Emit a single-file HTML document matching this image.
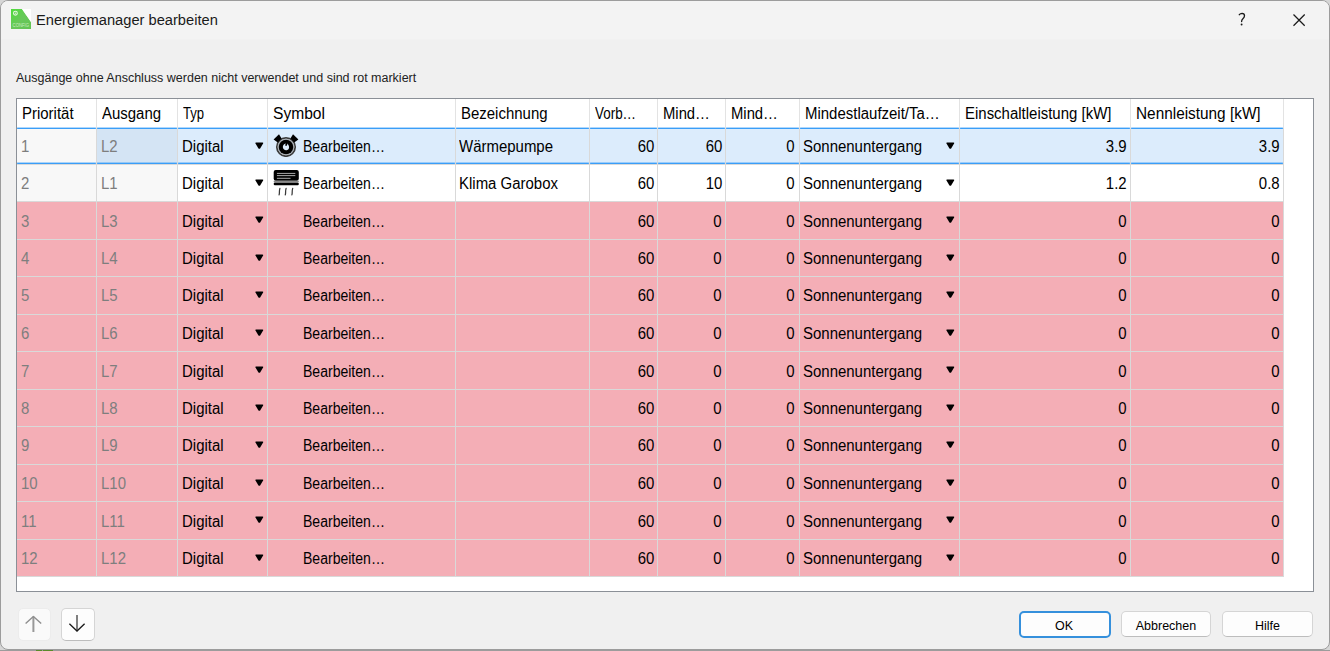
<!DOCTYPE html>
<html><head><meta charset="utf-8"><style>
html,body{margin:0;padding:0;}
body{width:1330px;height:651px;position:relative;overflow:hidden;background:#d6d6d6;font-family:"Liberation Sans",sans-serif;}
#win{position:absolute;left:0;top:0;width:1328px;height:648px;border:1px solid #9c9c9c;border-radius:8px;background:#f0f0f0;overflow:hidden;}
#tb{position:absolute;left:0;top:0;width:1328px;height:38px;background:#f3f3f3;border-bottom:1px solid #f1f1f1;}
.t{position:absolute;white-space:pre;line-height:1;}
#frame{position:absolute;left:16px;top:98px;width:1296px;height:492px;border:1px solid #8b9097;background:#fff;}
.c{position:absolute;overflow:hidden;}
.txt{position:absolute;white-space:pre;font-size:15.6px;line-height:1;color:#000;transform:scaleX(0.96);transform-origin:0 0;}
.txr{transform-origin:100% 0;}
.ar{position:absolute;}
.ic{position:absolute;}
.gl{position:absolute;background:#d9d9d9;}
.btn{position:absolute;box-sizing:border-box;border-radius:5px;background:#fdfdfd;border:1px solid #d5d5d5;border-bottom-color:#bdbdbd;font-size:12.5px;color:#000;text-align:center;}
</style></head><body>
<div id="win">
<div id="tb"></div>

<svg style="position:absolute;left:10px;top:8px" width="20" height="20" viewBox="0 0 20 20">
<defs><linearGradient id="gg" x1="0" y1="0" x2="1" y2="1"><stop offset="0" stop-color="#4fdc3c"/><stop offset="0.5" stop-color="#68c85a"/><stop offset="1" stop-color="#62c454"/></linearGradient></defs>
<path d="M0 0 L11 0 L20 13 L20 20 L0 20 Z" fill="url(#gg)"/>
<path d="M11 0 L20 0 L20 13 Z" fill="#ffffff"/>
<circle cx="4.4" cy="4.2" r="1.9" fill="none" stroke="#e6f6e2" stroke-width="1.1"/>
<circle cx="4.4" cy="4.2" r="0.6" fill="#e6f6e2"/>
<text x="1.6" y="18.2" font-family="Liberation Sans" font-size="5" textLength="16.5" lengthAdjust="spacingAndGlyphs" fill="#c8ecc0">CONFIG</text>
</svg>
<div class="t" style="left:35px;top:11px;font-size:15.4px;color:#1a1a1a;transform:scaleX(0.953);transform-origin:0 0">Energiemanager bearbeiten</div>
<svg style="position:absolute;left:1233px;top:9px" width="16" height="18" viewBox="0 0 16 18"><path d="M5.3 4.7 Q6.4 3.3 8 3.3 Q10.5 3.4 10.5 5.8 Q10.5 7.4 8.9 8.8 Q7.6 9.9 7.6 11.6" stroke="#1a1a1a" stroke-width="1.35" fill="none" stroke-linecap="round"/><circle cx="7.6" cy="14.5" r="0.95" fill="#1a1a1a"/></svg>
<svg style="position:absolute;left:1290px;top:11px" width="16" height="16" viewBox="0 0 16 16"><path d="M2.5 2.5 L13.7 13.7 M13.7 2.5 L2.5 13.7" stroke="#1a1a1a" stroke-width="1.25"/></svg>
<div class="t" style="left:15px;top:71px;font-size:12.5px;color:#222">Ausgänge ohne Anschluss werden nicht verwendet und sind rot markiert</div>
</div>
<div id="frame"></div>
<div class="txt" style="left:22px;top:106px;transform:scaleX(0.96)">Priorität</div>
<div class="gl" style="left:96px;top:99px;width:1px;height:29px;background:#e3e3e3"></div>
<div class="txt" style="left:102px;top:106px;transform:scaleX(0.96)">Ausgang</div>
<div class="gl" style="left:177px;top:99px;width:1px;height:29px;background:#e3e3e3"></div>
<div class="txt" style="left:183px;top:106px;transform:scaleX(0.84)">Typ</div>
<div class="gl" style="left:267px;top:99px;width:1px;height:29px;background:#e3e3e3"></div>
<div class="txt" style="left:273px;top:106px;transform:scaleX(1.0)">Symbol</div>
<div class="gl" style="left:455px;top:99px;width:1px;height:29px;background:#e3e3e3"></div>
<div class="txt" style="left:461px;top:106px;transform:scaleX(0.96)">Bezeichnung</div>
<div class="gl" style="left:589px;top:99px;width:1px;height:29px;background:#e3e3e3"></div>
<div class="txt" style="left:595px;top:106px;transform:scaleX(0.86)">Vorb…</div>
<div class="gl" style="left:657px;top:99px;width:1px;height:29px;background:#e3e3e3"></div>
<div class="txt" style="left:663px;top:106px;transform:scaleX(0.95)">Mind…</div>
<div class="gl" style="left:725px;top:99px;width:1px;height:29px;background:#e3e3e3"></div>
<div class="txt" style="left:731px;top:106px;transform:scaleX(0.95)">Mind…</div>
<div class="gl" style="left:799px;top:99px;width:1px;height:29px;background:#e3e3e3"></div>
<div class="txt" style="left:805px;top:106px;transform:scaleX(0.96)">Mindestlaufzeit/Ta…</div>
<div class="gl" style="left:959px;top:99px;width:1px;height:29px;background:#e3e3e3"></div>
<div class="txt" style="left:965px;top:106px;transform:scaleX(0.96)">Einschaltleistung [kW]</div>
<div class="gl" style="left:1130px;top:99px;width:1px;height:29px;background:#e3e3e3"></div>
<div class="txt" style="left:1136px;top:106px;transform:scaleX(0.985)">Nennleistung [kW]</div>
<div class="gl" style="left:1283px;top:99px;width:1px;height:29px;background:#e3e3e3"></div>
<div class="c" style="left:17px;top:128px;width:79px;height:36px;background:#f8f8f8"></div>
<div class="gl" style="left:96px;top:128px;width:1px;height:37px"></div>
<div class="gl" style="left:17px;top:164px;width:79px;height:1px"></div>
<div style="position:absolute;left:17px;top:127px;width:79px;height:1px;background:#3a9ef8;opacity:0.4;border-radius:1px"></div>
<div style="position:absolute;left:17px;top:128px;width:79px;height:1px;background:#3a9ef8;border-radius:1px"></div>
<div style="position:absolute;left:17px;top:162px;width:79px;height:1px;background:#3a9ef8;opacity:0.4;border-radius:1px"></div>
<div style="position:absolute;left:17px;top:163px;width:79px;height:1px;background:#3a9ef8;border-radius:1px"></div>
<div class="c" style="left:97px;top:128px;width:80px;height:36px;background:#d4e4f4"></div>
<div class="gl" style="left:177px;top:128px;width:1px;height:37px"></div>
<div class="gl" style="left:97px;top:164px;width:80px;height:1px"></div>
<div style="position:absolute;left:97px;top:127px;width:80px;height:1px;background:#3a9ef8;opacity:0.4;border-radius:1px"></div>
<div style="position:absolute;left:97px;top:128px;width:80px;height:1px;background:#3a9ef8;border-radius:1px"></div>
<div style="position:absolute;left:97px;top:162px;width:80px;height:1px;background:#3a9ef8;opacity:0.4;border-radius:1px"></div>
<div style="position:absolute;left:97px;top:163px;width:80px;height:1px;background:#3a9ef8;border-radius:1px"></div>
<div class="c" style="left:178px;top:128px;width:89px;height:36px;background:#dcecfc"></div>
<div class="gl" style="left:267px;top:128px;width:1px;height:37px"></div>
<div class="gl" style="left:178px;top:164px;width:89px;height:1px"></div>
<div style="position:absolute;left:178px;top:127px;width:89px;height:1px;background:#3a9ef8;opacity:0.4;border-radius:1px"></div>
<div style="position:absolute;left:178px;top:128px;width:89px;height:1px;background:#3a9ef8;border-radius:1px"></div>
<div style="position:absolute;left:178px;top:162px;width:89px;height:1px;background:#3a9ef8;opacity:0.4;border-radius:1px"></div>
<div style="position:absolute;left:178px;top:163px;width:89px;height:1px;background:#3a9ef8;border-radius:1px"></div>
<div class="c" style="left:268px;top:128px;width:187px;height:36px;background:#dcecfc"></div>
<div class="gl" style="left:455px;top:128px;width:1px;height:37px"></div>
<div class="gl" style="left:268px;top:164px;width:187px;height:1px"></div>
<div style="position:absolute;left:268px;top:127px;width:187px;height:1px;background:#3a9ef8;opacity:0.4;border-radius:1px"></div>
<div style="position:absolute;left:268px;top:128px;width:187px;height:1px;background:#3a9ef8;border-radius:1px"></div>
<div style="position:absolute;left:268px;top:162px;width:187px;height:1px;background:#3a9ef8;opacity:0.4;border-radius:1px"></div>
<div style="position:absolute;left:268px;top:163px;width:187px;height:1px;background:#3a9ef8;border-radius:1px"></div>
<div class="c" style="left:456px;top:128px;width:133px;height:36px;background:#dcecfc"></div>
<div class="gl" style="left:589px;top:128px;width:1px;height:37px"></div>
<div class="gl" style="left:456px;top:164px;width:133px;height:1px"></div>
<div style="position:absolute;left:456px;top:127px;width:133px;height:1px;background:#3a9ef8;opacity:0.4;border-radius:1px"></div>
<div style="position:absolute;left:456px;top:128px;width:133px;height:1px;background:#3a9ef8;border-radius:1px"></div>
<div style="position:absolute;left:456px;top:162px;width:133px;height:1px;background:#3a9ef8;opacity:0.4;border-radius:1px"></div>
<div style="position:absolute;left:456px;top:163px;width:133px;height:1px;background:#3a9ef8;border-radius:1px"></div>
<div class="c" style="left:590px;top:128px;width:67px;height:36px;background:#dcecfc"></div>
<div class="gl" style="left:657px;top:128px;width:1px;height:37px"></div>
<div class="gl" style="left:590px;top:164px;width:67px;height:1px"></div>
<div style="position:absolute;left:590px;top:127px;width:67px;height:1px;background:#3a9ef8;opacity:0.4;border-radius:1px"></div>
<div style="position:absolute;left:590px;top:128px;width:67px;height:1px;background:#3a9ef8;border-radius:1px"></div>
<div style="position:absolute;left:590px;top:162px;width:67px;height:1px;background:#3a9ef8;opacity:0.4;border-radius:1px"></div>
<div style="position:absolute;left:590px;top:163px;width:67px;height:1px;background:#3a9ef8;border-radius:1px"></div>
<div class="c" style="left:658px;top:128px;width:67px;height:36px;background:#dcecfc"></div>
<div class="gl" style="left:725px;top:128px;width:1px;height:37px"></div>
<div class="gl" style="left:658px;top:164px;width:67px;height:1px"></div>
<div style="position:absolute;left:658px;top:127px;width:67px;height:1px;background:#3a9ef8;opacity:0.4;border-radius:1px"></div>
<div style="position:absolute;left:658px;top:128px;width:67px;height:1px;background:#3a9ef8;border-radius:1px"></div>
<div style="position:absolute;left:658px;top:162px;width:67px;height:1px;background:#3a9ef8;opacity:0.4;border-radius:1px"></div>
<div style="position:absolute;left:658px;top:163px;width:67px;height:1px;background:#3a9ef8;border-radius:1px"></div>
<div class="c" style="left:726px;top:128px;width:73px;height:36px;background:#dcecfc"></div>
<div class="gl" style="left:799px;top:128px;width:1px;height:37px"></div>
<div class="gl" style="left:726px;top:164px;width:73px;height:1px"></div>
<div style="position:absolute;left:726px;top:127px;width:73px;height:1px;background:#3a9ef8;opacity:0.4;border-radius:1px"></div>
<div style="position:absolute;left:726px;top:128px;width:73px;height:1px;background:#3a9ef8;border-radius:1px"></div>
<div style="position:absolute;left:726px;top:162px;width:73px;height:1px;background:#3a9ef8;opacity:0.4;border-radius:1px"></div>
<div style="position:absolute;left:726px;top:163px;width:73px;height:1px;background:#3a9ef8;border-radius:1px"></div>
<div class="c" style="left:800px;top:128px;width:159px;height:36px;background:#dcecfc"></div>
<div class="gl" style="left:959px;top:128px;width:1px;height:37px"></div>
<div class="gl" style="left:800px;top:164px;width:159px;height:1px"></div>
<div style="position:absolute;left:800px;top:127px;width:159px;height:1px;background:#3a9ef8;opacity:0.4;border-radius:1px"></div>
<div style="position:absolute;left:800px;top:128px;width:159px;height:1px;background:#3a9ef8;border-radius:1px"></div>
<div style="position:absolute;left:800px;top:162px;width:159px;height:1px;background:#3a9ef8;opacity:0.4;border-radius:1px"></div>
<div style="position:absolute;left:800px;top:163px;width:159px;height:1px;background:#3a9ef8;border-radius:1px"></div>
<div class="c" style="left:960px;top:128px;width:170px;height:36px;background:#dcecfc"></div>
<div class="gl" style="left:1130px;top:128px;width:1px;height:37px"></div>
<div class="gl" style="left:960px;top:164px;width:170px;height:1px"></div>
<div style="position:absolute;left:960px;top:127px;width:170px;height:1px;background:#3a9ef8;opacity:0.4;border-radius:1px"></div>
<div style="position:absolute;left:960px;top:128px;width:170px;height:1px;background:#3a9ef8;border-radius:1px"></div>
<div style="position:absolute;left:960px;top:162px;width:170px;height:1px;background:#3a9ef8;opacity:0.4;border-radius:1px"></div>
<div style="position:absolute;left:960px;top:163px;width:170px;height:1px;background:#3a9ef8;border-radius:1px"></div>
<div class="c" style="left:1131px;top:128px;width:152px;height:36px;background:#dcecfc"></div>
<div class="gl" style="left:1283px;top:128px;width:1px;height:37px"></div>
<div class="gl" style="left:1131px;top:164px;width:152px;height:1px"></div>
<div style="position:absolute;left:1131px;top:127px;width:152px;height:1px;background:#3a9ef8;opacity:0.4;border-radius:1px"></div>
<div style="position:absolute;left:1131px;top:128px;width:152px;height:1px;background:#3a9ef8;border-radius:1px"></div>
<div style="position:absolute;left:1131px;top:162px;width:152px;height:1px;background:#3a9ef8;opacity:0.4;border-radius:1px"></div>
<div style="position:absolute;left:1131px;top:163px;width:152px;height:1px;background:#3a9ef8;border-radius:1px"></div>
<div class="txt" style="left:21px;top:139px;color:#7e7e7e">1</div>
<div class="txt" style="left:101px;top:139px;color:#7e7e7e">L2</div>
<div class="txt" style="left:182px;top:139px">Digital</div>
<svg class="ar" style="left:254.7px;top:141.5px" width="9" height="8" viewBox="0 0 9 8"><path d="M1.1 0.5 L7.5 0.5 Q8.6 0.5 8.1 1.4 L5.3 6.3 Q4.3 7.3 3.3 6.3 L0.5 1.4 Q0 0.5 1.1 0.5 Z" fill="#000"/></svg>
<svg class="ic" style="left:272px;top:133px" width="28" height="24" viewBox="0 0 28 24">
<circle cx="14" cy="14" r="9.2" fill="none" stroke="#3a3a3a" stroke-width="1.7"/>
<circle cx="14" cy="14" r="7.9" fill="none" stroke="#9a9a9a" stroke-width="0.8"/>
<circle cx="14" cy="14" r="7.3" fill="#000"/>
<path d="M14 10.4 C11.6 10.6 10.6 12.6 10.9 14.6 C11.3 16.8 13.2 17.6 14.6 17.3 C16.6 16.9 17.4 15 17 13.4 C16.7 12.2 16 11.2 15.2 10.6 C15.5 11.8 15.1 12.8 14.2 13 C13.1 13.2 12.9 11.4 14 10.4 Z" fill="#dcecfc"/>
<path d="M1.6 6.6 L7 1.2 L9.6 5.6 L5.8 9.4 Z" fill="#000"/>
<path d="M26.4 6.6 L21 1.2 L18.4 5.6 L22.2 9.4 Z" fill="#000"/>
</svg>
<div class="txt" style="left:303px;top:139px;transform:scaleX(0.90)">Bearbeiten…</div>
<div class="txt" style="left:459px;top:139px">Wärmepumpe</div>
<div class="txt txr" style="right:676px;top:139px">60</div>
<div class="txt txr" style="right:608px;top:139px">60</div>
<div class="txt txr" style="right:535px;top:139px">0</div>
<div class="txt txr" style="right:203px;top:139px">3.9</div>
<div class="txt txr" style="right:50px;top:139px">3.9</div>
<div class="txt" style="left:803px;top:139px">Sonnenuntergang</div>
<svg class="ar" style="left:945.8px;top:141.5px" width="9" height="8" viewBox="0 0 9 8"><path d="M1.1 0.5 L7.5 0.5 Q8.6 0.5 8.1 1.4 L5.3 6.3 Q4.3 7.3 3.3 6.3 L0.5 1.4 Q0 0.5 1.1 0.5 Z" fill="#000"/></svg>
<div class="c" style="left:17px;top:165px;width:79px;height:36px;background:#f8f8f8"></div>
<div class="gl" style="left:96px;top:165px;width:1px;height:37px"></div>
<div class="gl" style="left:17px;top:201px;width:79px;height:1px"></div>
<div class="c" style="left:97px;top:165px;width:80px;height:36px;background:#f8f8f8"></div>
<div class="gl" style="left:177px;top:165px;width:1px;height:37px"></div>
<div class="gl" style="left:97px;top:201px;width:80px;height:1px"></div>
<div class="c" style="left:178px;top:165px;width:89px;height:36px;background:#fff"></div>
<div class="gl" style="left:267px;top:165px;width:1px;height:37px"></div>
<div class="gl" style="left:178px;top:201px;width:89px;height:1px"></div>
<div class="c" style="left:268px;top:165px;width:187px;height:36px;background:#fff"></div>
<div class="gl" style="left:455px;top:165px;width:1px;height:37px"></div>
<div class="gl" style="left:268px;top:201px;width:187px;height:1px"></div>
<div class="c" style="left:456px;top:165px;width:133px;height:36px;background:#fff"></div>
<div class="gl" style="left:589px;top:165px;width:1px;height:37px"></div>
<div class="gl" style="left:456px;top:201px;width:133px;height:1px"></div>
<div class="c" style="left:590px;top:165px;width:67px;height:36px;background:#fff"></div>
<div class="gl" style="left:657px;top:165px;width:1px;height:37px"></div>
<div class="gl" style="left:590px;top:201px;width:67px;height:1px"></div>
<div class="c" style="left:658px;top:165px;width:67px;height:36px;background:#fff"></div>
<div class="gl" style="left:725px;top:165px;width:1px;height:37px"></div>
<div class="gl" style="left:658px;top:201px;width:67px;height:1px"></div>
<div class="c" style="left:726px;top:165px;width:73px;height:36px;background:#fff"></div>
<div class="gl" style="left:799px;top:165px;width:1px;height:37px"></div>
<div class="gl" style="left:726px;top:201px;width:73px;height:1px"></div>
<div class="c" style="left:800px;top:165px;width:159px;height:36px;background:#fff"></div>
<div class="gl" style="left:959px;top:165px;width:1px;height:37px"></div>
<div class="gl" style="left:800px;top:201px;width:159px;height:1px"></div>
<div class="c" style="left:960px;top:165px;width:170px;height:36px;background:#fff"></div>
<div class="gl" style="left:1130px;top:165px;width:1px;height:37px"></div>
<div class="gl" style="left:960px;top:201px;width:170px;height:1px"></div>
<div class="c" style="left:1131px;top:165px;width:152px;height:36px;background:#fff"></div>
<div class="gl" style="left:1283px;top:165px;width:1px;height:37px"></div>
<div class="gl" style="left:1131px;top:201px;width:152px;height:1px"></div>
<div class="txt" style="left:21px;top:176px;color:#7e7e7e">2</div>
<div class="txt" style="left:101px;top:176px;color:#7e7e7e">L1</div>
<div class="txt" style="left:182px;top:176px">Digital</div>
<svg class="ar" style="left:254.7px;top:178.5px" width="9" height="8" viewBox="0 0 9 8"><path d="M1.1 0.5 L7.5 0.5 Q8.6 0.5 8.1 1.4 L5.3 6.3 Q4.3 7.3 3.3 6.3 L0.5 1.4 Q0 0.5 1.1 0.5 Z" fill="#000"/></svg>
<svg class="ic" style="left:272px;top:168px" width="28" height="28" viewBox="0 0 28 28">
<rect x="1.7" y="2" width="25.1" height="10.8" rx="2" fill="#000"/>
<rect x="4.9" y="4.9" width="18.4" height="1" fill="#a8a8a8"/>
<rect x="4.9" y="7.1" width="18.4" height="1" fill="#a8a8a8"/>
<rect x="4.9" y="9.8" width="13.6" height="1" fill="#a8a8a8"/>
<rect x="1.7" y="12.8" width="25.1" height="1.2" fill="#8a8a8a"/>
<rect x="1.7" y="14.6" width="25.1" height="2.6" rx="1.2" fill="#000"/>
<path d="M7.9 20.4 Q7.3 22.5 7.4 24 Q7.5 25.4 7.1 26.8" stroke="#3a3a3a" stroke-width="1.25" fill="none" stroke-linecap="round"/>
<path d="M14.1 20.4 Q13.5 22.5 13.6 24 Q13.7 25.4 13.3 26.8" stroke="#3a3a3a" stroke-width="1.25" fill="none" stroke-linecap="round"/>
<path d="M20.7 20.4 Q20.1 22.5 20.2 24 Q20.3 25.4 19.9 26.8" stroke="#3a3a3a" stroke-width="1.25" fill="none" stroke-linecap="round"/>
</svg>
<div class="txt" style="left:303px;top:176px;transform:scaleX(0.90)">Bearbeiten…</div>
<div class="txt" style="left:459px;top:176px">Klima Garobox</div>
<div class="txt txr" style="right:676px;top:176px">60</div>
<div class="txt txr" style="right:608px;top:176px">10</div>
<div class="txt txr" style="right:535px;top:176px">0</div>
<div class="txt txr" style="right:203px;top:176px">1.2</div>
<div class="txt txr" style="right:50px;top:176px">0.8</div>
<div class="txt" style="left:803px;top:176px">Sonnenuntergang</div>
<svg class="ar" style="left:945.8px;top:178.5px" width="9" height="8" viewBox="0 0 9 8"><path d="M1.1 0.5 L7.5 0.5 Q8.6 0.5 8.1 1.4 L5.3 6.3 Q4.3 7.3 3.3 6.3 L0.5 1.4 Q0 0.5 1.1 0.5 Z" fill="#000"/></svg>
<div class="c" style="left:17px;top:202px;width:79px;height:37px;background:#f4aeb6"></div>
<div class="gl" style="left:96px;top:202px;width:1px;height:38px"></div>
<div class="gl" style="left:17px;top:239px;width:79px;height:1px"></div>
<div class="c" style="left:97px;top:202px;width:80px;height:37px;background:#f4aeb6"></div>
<div class="gl" style="left:177px;top:202px;width:1px;height:38px"></div>
<div class="gl" style="left:97px;top:239px;width:80px;height:1px"></div>
<div class="c" style="left:178px;top:202px;width:89px;height:37px;background:#f4aeb6"></div>
<div class="gl" style="left:267px;top:202px;width:1px;height:38px"></div>
<div class="gl" style="left:178px;top:239px;width:89px;height:1px"></div>
<div class="c" style="left:268px;top:202px;width:187px;height:37px;background:#f4aeb6"></div>
<div class="gl" style="left:455px;top:202px;width:1px;height:38px"></div>
<div class="gl" style="left:268px;top:239px;width:187px;height:1px"></div>
<div class="c" style="left:456px;top:202px;width:133px;height:37px;background:#f4aeb6"></div>
<div class="gl" style="left:589px;top:202px;width:1px;height:38px"></div>
<div class="gl" style="left:456px;top:239px;width:133px;height:1px"></div>
<div class="c" style="left:590px;top:202px;width:67px;height:37px;background:#f4aeb6"></div>
<div class="gl" style="left:657px;top:202px;width:1px;height:38px"></div>
<div class="gl" style="left:590px;top:239px;width:67px;height:1px"></div>
<div class="c" style="left:658px;top:202px;width:67px;height:37px;background:#f4aeb6"></div>
<div class="gl" style="left:725px;top:202px;width:1px;height:38px"></div>
<div class="gl" style="left:658px;top:239px;width:67px;height:1px"></div>
<div class="c" style="left:726px;top:202px;width:73px;height:37px;background:#f4aeb6"></div>
<div class="gl" style="left:799px;top:202px;width:1px;height:38px"></div>
<div class="gl" style="left:726px;top:239px;width:73px;height:1px"></div>
<div class="c" style="left:800px;top:202px;width:159px;height:37px;background:#f4aeb6"></div>
<div class="gl" style="left:959px;top:202px;width:1px;height:38px"></div>
<div class="gl" style="left:800px;top:239px;width:159px;height:1px"></div>
<div class="c" style="left:960px;top:202px;width:170px;height:37px;background:#f4aeb6"></div>
<div class="gl" style="left:1130px;top:202px;width:1px;height:38px"></div>
<div class="gl" style="left:960px;top:239px;width:170px;height:1px"></div>
<div class="c" style="left:1131px;top:202px;width:152px;height:37px;background:#f4aeb6"></div>
<div class="gl" style="left:1283px;top:202px;width:1px;height:38px"></div>
<div class="gl" style="left:1131px;top:239px;width:152px;height:1px"></div>
<div class="txt" style="left:21px;top:214px;color:#7e7e7e">3</div>
<div class="txt" style="left:101px;top:214px;color:#7e7e7e">L3</div>
<div class="txt" style="left:182px;top:214px">Digital</div>
<svg class="ar" style="left:254.7px;top:216.0px" width="9" height="8" viewBox="0 0 9 8"><path d="M1.1 0.5 L7.5 0.5 Q8.6 0.5 8.1 1.4 L5.3 6.3 Q4.3 7.3 3.3 6.3 L0.5 1.4 Q0 0.5 1.1 0.5 Z" fill="#000"/></svg>
<div class="txt" style="left:303px;top:214px;transform:scaleX(0.90)">Bearbeiten…</div>
<div class="txt txr" style="right:676px;top:214px">60</div>
<div class="txt txr" style="right:608px;top:214px">0</div>
<div class="txt txr" style="right:535px;top:214px">0</div>
<div class="txt txr" style="right:203px;top:214px">0</div>
<div class="txt txr" style="right:50px;top:214px">0</div>
<div class="txt" style="left:803px;top:214px">Sonnenuntergang</div>
<svg class="ar" style="left:945.8px;top:216.0px" width="9" height="8" viewBox="0 0 9 8"><path d="M1.1 0.5 L7.5 0.5 Q8.6 0.5 8.1 1.4 L5.3 6.3 Q4.3 7.3 3.3 6.3 L0.5 1.4 Q0 0.5 1.1 0.5 Z" fill="#000"/></svg>
<div class="c" style="left:17px;top:240px;width:79px;height:36px;background:#f4aeb6"></div>
<div class="gl" style="left:96px;top:240px;width:1px;height:37px"></div>
<div class="gl" style="left:17px;top:276px;width:79px;height:1px"></div>
<div class="c" style="left:97px;top:240px;width:80px;height:36px;background:#f4aeb6"></div>
<div class="gl" style="left:177px;top:240px;width:1px;height:37px"></div>
<div class="gl" style="left:97px;top:276px;width:80px;height:1px"></div>
<div class="c" style="left:178px;top:240px;width:89px;height:36px;background:#f4aeb6"></div>
<div class="gl" style="left:267px;top:240px;width:1px;height:37px"></div>
<div class="gl" style="left:178px;top:276px;width:89px;height:1px"></div>
<div class="c" style="left:268px;top:240px;width:187px;height:36px;background:#f4aeb6"></div>
<div class="gl" style="left:455px;top:240px;width:1px;height:37px"></div>
<div class="gl" style="left:268px;top:276px;width:187px;height:1px"></div>
<div class="c" style="left:456px;top:240px;width:133px;height:36px;background:#f4aeb6"></div>
<div class="gl" style="left:589px;top:240px;width:1px;height:37px"></div>
<div class="gl" style="left:456px;top:276px;width:133px;height:1px"></div>
<div class="c" style="left:590px;top:240px;width:67px;height:36px;background:#f4aeb6"></div>
<div class="gl" style="left:657px;top:240px;width:1px;height:37px"></div>
<div class="gl" style="left:590px;top:276px;width:67px;height:1px"></div>
<div class="c" style="left:658px;top:240px;width:67px;height:36px;background:#f4aeb6"></div>
<div class="gl" style="left:725px;top:240px;width:1px;height:37px"></div>
<div class="gl" style="left:658px;top:276px;width:67px;height:1px"></div>
<div class="c" style="left:726px;top:240px;width:73px;height:36px;background:#f4aeb6"></div>
<div class="gl" style="left:799px;top:240px;width:1px;height:37px"></div>
<div class="gl" style="left:726px;top:276px;width:73px;height:1px"></div>
<div class="c" style="left:800px;top:240px;width:159px;height:36px;background:#f4aeb6"></div>
<div class="gl" style="left:959px;top:240px;width:1px;height:37px"></div>
<div class="gl" style="left:800px;top:276px;width:159px;height:1px"></div>
<div class="c" style="left:960px;top:240px;width:170px;height:36px;background:#f4aeb6"></div>
<div class="gl" style="left:1130px;top:240px;width:1px;height:37px"></div>
<div class="gl" style="left:960px;top:276px;width:170px;height:1px"></div>
<div class="c" style="left:1131px;top:240px;width:152px;height:36px;background:#f4aeb6"></div>
<div class="gl" style="left:1283px;top:240px;width:1px;height:37px"></div>
<div class="gl" style="left:1131px;top:276px;width:152px;height:1px"></div>
<div class="txt" style="left:21px;top:251px;color:#7e7e7e">4</div>
<div class="txt" style="left:101px;top:251px;color:#7e7e7e">L4</div>
<div class="txt" style="left:182px;top:251px">Digital</div>
<svg class="ar" style="left:254.7px;top:253.5px" width="9" height="8" viewBox="0 0 9 8"><path d="M1.1 0.5 L7.5 0.5 Q8.6 0.5 8.1 1.4 L5.3 6.3 Q4.3 7.3 3.3 6.3 L0.5 1.4 Q0 0.5 1.1 0.5 Z" fill="#000"/></svg>
<div class="txt" style="left:303px;top:251px;transform:scaleX(0.90)">Bearbeiten…</div>
<div class="txt txr" style="right:676px;top:251px">60</div>
<div class="txt txr" style="right:608px;top:251px">0</div>
<div class="txt txr" style="right:535px;top:251px">0</div>
<div class="txt txr" style="right:203px;top:251px">0</div>
<div class="txt txr" style="right:50px;top:251px">0</div>
<div class="txt" style="left:803px;top:251px">Sonnenuntergang</div>
<svg class="ar" style="left:945.8px;top:253.5px" width="9" height="8" viewBox="0 0 9 8"><path d="M1.1 0.5 L7.5 0.5 Q8.6 0.5 8.1 1.4 L5.3 6.3 Q4.3 7.3 3.3 6.3 L0.5 1.4 Q0 0.5 1.1 0.5 Z" fill="#000"/></svg>
<div class="c" style="left:17px;top:277px;width:79px;height:37px;background:#f4aeb6"></div>
<div class="gl" style="left:96px;top:277px;width:1px;height:38px"></div>
<div class="gl" style="left:17px;top:314px;width:79px;height:1px"></div>
<div class="c" style="left:97px;top:277px;width:80px;height:37px;background:#f4aeb6"></div>
<div class="gl" style="left:177px;top:277px;width:1px;height:38px"></div>
<div class="gl" style="left:97px;top:314px;width:80px;height:1px"></div>
<div class="c" style="left:178px;top:277px;width:89px;height:37px;background:#f4aeb6"></div>
<div class="gl" style="left:267px;top:277px;width:1px;height:38px"></div>
<div class="gl" style="left:178px;top:314px;width:89px;height:1px"></div>
<div class="c" style="left:268px;top:277px;width:187px;height:37px;background:#f4aeb6"></div>
<div class="gl" style="left:455px;top:277px;width:1px;height:38px"></div>
<div class="gl" style="left:268px;top:314px;width:187px;height:1px"></div>
<div class="c" style="left:456px;top:277px;width:133px;height:37px;background:#f4aeb6"></div>
<div class="gl" style="left:589px;top:277px;width:1px;height:38px"></div>
<div class="gl" style="left:456px;top:314px;width:133px;height:1px"></div>
<div class="c" style="left:590px;top:277px;width:67px;height:37px;background:#f4aeb6"></div>
<div class="gl" style="left:657px;top:277px;width:1px;height:38px"></div>
<div class="gl" style="left:590px;top:314px;width:67px;height:1px"></div>
<div class="c" style="left:658px;top:277px;width:67px;height:37px;background:#f4aeb6"></div>
<div class="gl" style="left:725px;top:277px;width:1px;height:38px"></div>
<div class="gl" style="left:658px;top:314px;width:67px;height:1px"></div>
<div class="c" style="left:726px;top:277px;width:73px;height:37px;background:#f4aeb6"></div>
<div class="gl" style="left:799px;top:277px;width:1px;height:38px"></div>
<div class="gl" style="left:726px;top:314px;width:73px;height:1px"></div>
<div class="c" style="left:800px;top:277px;width:159px;height:37px;background:#f4aeb6"></div>
<div class="gl" style="left:959px;top:277px;width:1px;height:38px"></div>
<div class="gl" style="left:800px;top:314px;width:159px;height:1px"></div>
<div class="c" style="left:960px;top:277px;width:170px;height:37px;background:#f4aeb6"></div>
<div class="gl" style="left:1130px;top:277px;width:1px;height:38px"></div>
<div class="gl" style="left:960px;top:314px;width:170px;height:1px"></div>
<div class="c" style="left:1131px;top:277px;width:152px;height:37px;background:#f4aeb6"></div>
<div class="gl" style="left:1283px;top:277px;width:1px;height:38px"></div>
<div class="gl" style="left:1131px;top:314px;width:152px;height:1px"></div>
<div class="txt" style="left:21px;top:288px;color:#7e7e7e">5</div>
<div class="txt" style="left:101px;top:288px;color:#7e7e7e">L5</div>
<div class="txt" style="left:182px;top:288px">Digital</div>
<svg class="ar" style="left:254.7px;top:291.0px" width="9" height="8" viewBox="0 0 9 8"><path d="M1.1 0.5 L7.5 0.5 Q8.6 0.5 8.1 1.4 L5.3 6.3 Q4.3 7.3 3.3 6.3 L0.5 1.4 Q0 0.5 1.1 0.5 Z" fill="#000"/></svg>
<div class="txt" style="left:303px;top:288px;transform:scaleX(0.90)">Bearbeiten…</div>
<div class="txt txr" style="right:676px;top:288px">60</div>
<div class="txt txr" style="right:608px;top:288px">0</div>
<div class="txt txr" style="right:535px;top:288px">0</div>
<div class="txt txr" style="right:203px;top:288px">0</div>
<div class="txt txr" style="right:50px;top:288px">0</div>
<div class="txt" style="left:803px;top:288px">Sonnenuntergang</div>
<svg class="ar" style="left:945.8px;top:291.0px" width="9" height="8" viewBox="0 0 9 8"><path d="M1.1 0.5 L7.5 0.5 Q8.6 0.5 8.1 1.4 L5.3 6.3 Q4.3 7.3 3.3 6.3 L0.5 1.4 Q0 0.5 1.1 0.5 Z" fill="#000"/></svg>
<div class="c" style="left:17px;top:315px;width:79px;height:36px;background:#f4aeb6"></div>
<div class="gl" style="left:96px;top:315px;width:1px;height:37px"></div>
<div class="gl" style="left:17px;top:351px;width:79px;height:1px"></div>
<div class="c" style="left:97px;top:315px;width:80px;height:36px;background:#f4aeb6"></div>
<div class="gl" style="left:177px;top:315px;width:1px;height:37px"></div>
<div class="gl" style="left:97px;top:351px;width:80px;height:1px"></div>
<div class="c" style="left:178px;top:315px;width:89px;height:36px;background:#f4aeb6"></div>
<div class="gl" style="left:267px;top:315px;width:1px;height:37px"></div>
<div class="gl" style="left:178px;top:351px;width:89px;height:1px"></div>
<div class="c" style="left:268px;top:315px;width:187px;height:36px;background:#f4aeb6"></div>
<div class="gl" style="left:455px;top:315px;width:1px;height:37px"></div>
<div class="gl" style="left:268px;top:351px;width:187px;height:1px"></div>
<div class="c" style="left:456px;top:315px;width:133px;height:36px;background:#f4aeb6"></div>
<div class="gl" style="left:589px;top:315px;width:1px;height:37px"></div>
<div class="gl" style="left:456px;top:351px;width:133px;height:1px"></div>
<div class="c" style="left:590px;top:315px;width:67px;height:36px;background:#f4aeb6"></div>
<div class="gl" style="left:657px;top:315px;width:1px;height:37px"></div>
<div class="gl" style="left:590px;top:351px;width:67px;height:1px"></div>
<div class="c" style="left:658px;top:315px;width:67px;height:36px;background:#f4aeb6"></div>
<div class="gl" style="left:725px;top:315px;width:1px;height:37px"></div>
<div class="gl" style="left:658px;top:351px;width:67px;height:1px"></div>
<div class="c" style="left:726px;top:315px;width:73px;height:36px;background:#f4aeb6"></div>
<div class="gl" style="left:799px;top:315px;width:1px;height:37px"></div>
<div class="gl" style="left:726px;top:351px;width:73px;height:1px"></div>
<div class="c" style="left:800px;top:315px;width:159px;height:36px;background:#f4aeb6"></div>
<div class="gl" style="left:959px;top:315px;width:1px;height:37px"></div>
<div class="gl" style="left:800px;top:351px;width:159px;height:1px"></div>
<div class="c" style="left:960px;top:315px;width:170px;height:36px;background:#f4aeb6"></div>
<div class="gl" style="left:1130px;top:315px;width:1px;height:37px"></div>
<div class="gl" style="left:960px;top:351px;width:170px;height:1px"></div>
<div class="c" style="left:1131px;top:315px;width:152px;height:36px;background:#f4aeb6"></div>
<div class="gl" style="left:1283px;top:315px;width:1px;height:37px"></div>
<div class="gl" style="left:1131px;top:351px;width:152px;height:1px"></div>
<div class="txt" style="left:21px;top:326px;color:#7e7e7e">6</div>
<div class="txt" style="left:101px;top:326px;color:#7e7e7e">L6</div>
<div class="txt" style="left:182px;top:326px">Digital</div>
<svg class="ar" style="left:254.7px;top:328.5px" width="9" height="8" viewBox="0 0 9 8"><path d="M1.1 0.5 L7.5 0.5 Q8.6 0.5 8.1 1.4 L5.3 6.3 Q4.3 7.3 3.3 6.3 L0.5 1.4 Q0 0.5 1.1 0.5 Z" fill="#000"/></svg>
<div class="txt" style="left:303px;top:326px;transform:scaleX(0.90)">Bearbeiten…</div>
<div class="txt txr" style="right:676px;top:326px">60</div>
<div class="txt txr" style="right:608px;top:326px">0</div>
<div class="txt txr" style="right:535px;top:326px">0</div>
<div class="txt txr" style="right:203px;top:326px">0</div>
<div class="txt txr" style="right:50px;top:326px">0</div>
<div class="txt" style="left:803px;top:326px">Sonnenuntergang</div>
<svg class="ar" style="left:945.8px;top:328.5px" width="9" height="8" viewBox="0 0 9 8"><path d="M1.1 0.5 L7.5 0.5 Q8.6 0.5 8.1 1.4 L5.3 6.3 Q4.3 7.3 3.3 6.3 L0.5 1.4 Q0 0.5 1.1 0.5 Z" fill="#000"/></svg>
<div class="c" style="left:17px;top:352px;width:79px;height:37px;background:#f4aeb6"></div>
<div class="gl" style="left:96px;top:352px;width:1px;height:38px"></div>
<div class="gl" style="left:17px;top:389px;width:79px;height:1px"></div>
<div class="c" style="left:97px;top:352px;width:80px;height:37px;background:#f4aeb6"></div>
<div class="gl" style="left:177px;top:352px;width:1px;height:38px"></div>
<div class="gl" style="left:97px;top:389px;width:80px;height:1px"></div>
<div class="c" style="left:178px;top:352px;width:89px;height:37px;background:#f4aeb6"></div>
<div class="gl" style="left:267px;top:352px;width:1px;height:38px"></div>
<div class="gl" style="left:178px;top:389px;width:89px;height:1px"></div>
<div class="c" style="left:268px;top:352px;width:187px;height:37px;background:#f4aeb6"></div>
<div class="gl" style="left:455px;top:352px;width:1px;height:38px"></div>
<div class="gl" style="left:268px;top:389px;width:187px;height:1px"></div>
<div class="c" style="left:456px;top:352px;width:133px;height:37px;background:#f4aeb6"></div>
<div class="gl" style="left:589px;top:352px;width:1px;height:38px"></div>
<div class="gl" style="left:456px;top:389px;width:133px;height:1px"></div>
<div class="c" style="left:590px;top:352px;width:67px;height:37px;background:#f4aeb6"></div>
<div class="gl" style="left:657px;top:352px;width:1px;height:38px"></div>
<div class="gl" style="left:590px;top:389px;width:67px;height:1px"></div>
<div class="c" style="left:658px;top:352px;width:67px;height:37px;background:#f4aeb6"></div>
<div class="gl" style="left:725px;top:352px;width:1px;height:38px"></div>
<div class="gl" style="left:658px;top:389px;width:67px;height:1px"></div>
<div class="c" style="left:726px;top:352px;width:73px;height:37px;background:#f4aeb6"></div>
<div class="gl" style="left:799px;top:352px;width:1px;height:38px"></div>
<div class="gl" style="left:726px;top:389px;width:73px;height:1px"></div>
<div class="c" style="left:800px;top:352px;width:159px;height:37px;background:#f4aeb6"></div>
<div class="gl" style="left:959px;top:352px;width:1px;height:38px"></div>
<div class="gl" style="left:800px;top:389px;width:159px;height:1px"></div>
<div class="c" style="left:960px;top:352px;width:170px;height:37px;background:#f4aeb6"></div>
<div class="gl" style="left:1130px;top:352px;width:1px;height:38px"></div>
<div class="gl" style="left:960px;top:389px;width:170px;height:1px"></div>
<div class="c" style="left:1131px;top:352px;width:152px;height:37px;background:#f4aeb6"></div>
<div class="gl" style="left:1283px;top:352px;width:1px;height:38px"></div>
<div class="gl" style="left:1131px;top:389px;width:152px;height:1px"></div>
<div class="txt" style="left:21px;top:364px;color:#7e7e7e">7</div>
<div class="txt" style="left:101px;top:364px;color:#7e7e7e">L7</div>
<div class="txt" style="left:182px;top:364px">Digital</div>
<svg class="ar" style="left:254.7px;top:366.0px" width="9" height="8" viewBox="0 0 9 8"><path d="M1.1 0.5 L7.5 0.5 Q8.6 0.5 8.1 1.4 L5.3 6.3 Q4.3 7.3 3.3 6.3 L0.5 1.4 Q0 0.5 1.1 0.5 Z" fill="#000"/></svg>
<div class="txt" style="left:303px;top:364px;transform:scaleX(0.90)">Bearbeiten…</div>
<div class="txt txr" style="right:676px;top:364px">60</div>
<div class="txt txr" style="right:608px;top:364px">0</div>
<div class="txt txr" style="right:535px;top:364px">0</div>
<div class="txt txr" style="right:203px;top:364px">0</div>
<div class="txt txr" style="right:50px;top:364px">0</div>
<div class="txt" style="left:803px;top:364px">Sonnenuntergang</div>
<svg class="ar" style="left:945.8px;top:366.0px" width="9" height="8" viewBox="0 0 9 8"><path d="M1.1 0.5 L7.5 0.5 Q8.6 0.5 8.1 1.4 L5.3 6.3 Q4.3 7.3 3.3 6.3 L0.5 1.4 Q0 0.5 1.1 0.5 Z" fill="#000"/></svg>
<div class="c" style="left:17px;top:390px;width:79px;height:36px;background:#f4aeb6"></div>
<div class="gl" style="left:96px;top:390px;width:1px;height:37px"></div>
<div class="gl" style="left:17px;top:426px;width:79px;height:1px"></div>
<div class="c" style="left:97px;top:390px;width:80px;height:36px;background:#f4aeb6"></div>
<div class="gl" style="left:177px;top:390px;width:1px;height:37px"></div>
<div class="gl" style="left:97px;top:426px;width:80px;height:1px"></div>
<div class="c" style="left:178px;top:390px;width:89px;height:36px;background:#f4aeb6"></div>
<div class="gl" style="left:267px;top:390px;width:1px;height:37px"></div>
<div class="gl" style="left:178px;top:426px;width:89px;height:1px"></div>
<div class="c" style="left:268px;top:390px;width:187px;height:36px;background:#f4aeb6"></div>
<div class="gl" style="left:455px;top:390px;width:1px;height:37px"></div>
<div class="gl" style="left:268px;top:426px;width:187px;height:1px"></div>
<div class="c" style="left:456px;top:390px;width:133px;height:36px;background:#f4aeb6"></div>
<div class="gl" style="left:589px;top:390px;width:1px;height:37px"></div>
<div class="gl" style="left:456px;top:426px;width:133px;height:1px"></div>
<div class="c" style="left:590px;top:390px;width:67px;height:36px;background:#f4aeb6"></div>
<div class="gl" style="left:657px;top:390px;width:1px;height:37px"></div>
<div class="gl" style="left:590px;top:426px;width:67px;height:1px"></div>
<div class="c" style="left:658px;top:390px;width:67px;height:36px;background:#f4aeb6"></div>
<div class="gl" style="left:725px;top:390px;width:1px;height:37px"></div>
<div class="gl" style="left:658px;top:426px;width:67px;height:1px"></div>
<div class="c" style="left:726px;top:390px;width:73px;height:36px;background:#f4aeb6"></div>
<div class="gl" style="left:799px;top:390px;width:1px;height:37px"></div>
<div class="gl" style="left:726px;top:426px;width:73px;height:1px"></div>
<div class="c" style="left:800px;top:390px;width:159px;height:36px;background:#f4aeb6"></div>
<div class="gl" style="left:959px;top:390px;width:1px;height:37px"></div>
<div class="gl" style="left:800px;top:426px;width:159px;height:1px"></div>
<div class="c" style="left:960px;top:390px;width:170px;height:36px;background:#f4aeb6"></div>
<div class="gl" style="left:1130px;top:390px;width:1px;height:37px"></div>
<div class="gl" style="left:960px;top:426px;width:170px;height:1px"></div>
<div class="c" style="left:1131px;top:390px;width:152px;height:36px;background:#f4aeb6"></div>
<div class="gl" style="left:1283px;top:390px;width:1px;height:37px"></div>
<div class="gl" style="left:1131px;top:426px;width:152px;height:1px"></div>
<div class="txt" style="left:21px;top:401px;color:#7e7e7e">8</div>
<div class="txt" style="left:101px;top:401px;color:#7e7e7e">L8</div>
<div class="txt" style="left:182px;top:401px">Digital</div>
<svg class="ar" style="left:254.7px;top:403.5px" width="9" height="8" viewBox="0 0 9 8"><path d="M1.1 0.5 L7.5 0.5 Q8.6 0.5 8.1 1.4 L5.3 6.3 Q4.3 7.3 3.3 6.3 L0.5 1.4 Q0 0.5 1.1 0.5 Z" fill="#000"/></svg>
<div class="txt" style="left:303px;top:401px;transform:scaleX(0.90)">Bearbeiten…</div>
<div class="txt txr" style="right:676px;top:401px">60</div>
<div class="txt txr" style="right:608px;top:401px">0</div>
<div class="txt txr" style="right:535px;top:401px">0</div>
<div class="txt txr" style="right:203px;top:401px">0</div>
<div class="txt txr" style="right:50px;top:401px">0</div>
<div class="txt" style="left:803px;top:401px">Sonnenuntergang</div>
<svg class="ar" style="left:945.8px;top:403.5px" width="9" height="8" viewBox="0 0 9 8"><path d="M1.1 0.5 L7.5 0.5 Q8.6 0.5 8.1 1.4 L5.3 6.3 Q4.3 7.3 3.3 6.3 L0.5 1.4 Q0 0.5 1.1 0.5 Z" fill="#000"/></svg>
<div class="c" style="left:17px;top:427px;width:79px;height:37px;background:#f4aeb6"></div>
<div class="gl" style="left:96px;top:427px;width:1px;height:38px"></div>
<div class="gl" style="left:17px;top:464px;width:79px;height:1px"></div>
<div class="c" style="left:97px;top:427px;width:80px;height:37px;background:#f4aeb6"></div>
<div class="gl" style="left:177px;top:427px;width:1px;height:38px"></div>
<div class="gl" style="left:97px;top:464px;width:80px;height:1px"></div>
<div class="c" style="left:178px;top:427px;width:89px;height:37px;background:#f4aeb6"></div>
<div class="gl" style="left:267px;top:427px;width:1px;height:38px"></div>
<div class="gl" style="left:178px;top:464px;width:89px;height:1px"></div>
<div class="c" style="left:268px;top:427px;width:187px;height:37px;background:#f4aeb6"></div>
<div class="gl" style="left:455px;top:427px;width:1px;height:38px"></div>
<div class="gl" style="left:268px;top:464px;width:187px;height:1px"></div>
<div class="c" style="left:456px;top:427px;width:133px;height:37px;background:#f4aeb6"></div>
<div class="gl" style="left:589px;top:427px;width:1px;height:38px"></div>
<div class="gl" style="left:456px;top:464px;width:133px;height:1px"></div>
<div class="c" style="left:590px;top:427px;width:67px;height:37px;background:#f4aeb6"></div>
<div class="gl" style="left:657px;top:427px;width:1px;height:38px"></div>
<div class="gl" style="left:590px;top:464px;width:67px;height:1px"></div>
<div class="c" style="left:658px;top:427px;width:67px;height:37px;background:#f4aeb6"></div>
<div class="gl" style="left:725px;top:427px;width:1px;height:38px"></div>
<div class="gl" style="left:658px;top:464px;width:67px;height:1px"></div>
<div class="c" style="left:726px;top:427px;width:73px;height:37px;background:#f4aeb6"></div>
<div class="gl" style="left:799px;top:427px;width:1px;height:38px"></div>
<div class="gl" style="left:726px;top:464px;width:73px;height:1px"></div>
<div class="c" style="left:800px;top:427px;width:159px;height:37px;background:#f4aeb6"></div>
<div class="gl" style="left:959px;top:427px;width:1px;height:38px"></div>
<div class="gl" style="left:800px;top:464px;width:159px;height:1px"></div>
<div class="c" style="left:960px;top:427px;width:170px;height:37px;background:#f4aeb6"></div>
<div class="gl" style="left:1130px;top:427px;width:1px;height:38px"></div>
<div class="gl" style="left:960px;top:464px;width:170px;height:1px"></div>
<div class="c" style="left:1131px;top:427px;width:152px;height:37px;background:#f4aeb6"></div>
<div class="gl" style="left:1283px;top:427px;width:1px;height:38px"></div>
<div class="gl" style="left:1131px;top:464px;width:152px;height:1px"></div>
<div class="txt" style="left:21px;top:438px;color:#7e7e7e">9</div>
<div class="txt" style="left:101px;top:438px;color:#7e7e7e">L9</div>
<div class="txt" style="left:182px;top:438px">Digital</div>
<svg class="ar" style="left:254.7px;top:441.0px" width="9" height="8" viewBox="0 0 9 8"><path d="M1.1 0.5 L7.5 0.5 Q8.6 0.5 8.1 1.4 L5.3 6.3 Q4.3 7.3 3.3 6.3 L0.5 1.4 Q0 0.5 1.1 0.5 Z" fill="#000"/></svg>
<div class="txt" style="left:303px;top:438px;transform:scaleX(0.90)">Bearbeiten…</div>
<div class="txt txr" style="right:676px;top:438px">60</div>
<div class="txt txr" style="right:608px;top:438px">0</div>
<div class="txt txr" style="right:535px;top:438px">0</div>
<div class="txt txr" style="right:203px;top:438px">0</div>
<div class="txt txr" style="right:50px;top:438px">0</div>
<div class="txt" style="left:803px;top:438px">Sonnenuntergang</div>
<svg class="ar" style="left:945.8px;top:441.0px" width="9" height="8" viewBox="0 0 9 8"><path d="M1.1 0.5 L7.5 0.5 Q8.6 0.5 8.1 1.4 L5.3 6.3 Q4.3 7.3 3.3 6.3 L0.5 1.4 Q0 0.5 1.1 0.5 Z" fill="#000"/></svg>
<div class="c" style="left:17px;top:465px;width:79px;height:36px;background:#f4aeb6"></div>
<div class="gl" style="left:96px;top:465px;width:1px;height:37px"></div>
<div class="gl" style="left:17px;top:501px;width:79px;height:1px"></div>
<div class="c" style="left:97px;top:465px;width:80px;height:36px;background:#f4aeb6"></div>
<div class="gl" style="left:177px;top:465px;width:1px;height:37px"></div>
<div class="gl" style="left:97px;top:501px;width:80px;height:1px"></div>
<div class="c" style="left:178px;top:465px;width:89px;height:36px;background:#f4aeb6"></div>
<div class="gl" style="left:267px;top:465px;width:1px;height:37px"></div>
<div class="gl" style="left:178px;top:501px;width:89px;height:1px"></div>
<div class="c" style="left:268px;top:465px;width:187px;height:36px;background:#f4aeb6"></div>
<div class="gl" style="left:455px;top:465px;width:1px;height:37px"></div>
<div class="gl" style="left:268px;top:501px;width:187px;height:1px"></div>
<div class="c" style="left:456px;top:465px;width:133px;height:36px;background:#f4aeb6"></div>
<div class="gl" style="left:589px;top:465px;width:1px;height:37px"></div>
<div class="gl" style="left:456px;top:501px;width:133px;height:1px"></div>
<div class="c" style="left:590px;top:465px;width:67px;height:36px;background:#f4aeb6"></div>
<div class="gl" style="left:657px;top:465px;width:1px;height:37px"></div>
<div class="gl" style="left:590px;top:501px;width:67px;height:1px"></div>
<div class="c" style="left:658px;top:465px;width:67px;height:36px;background:#f4aeb6"></div>
<div class="gl" style="left:725px;top:465px;width:1px;height:37px"></div>
<div class="gl" style="left:658px;top:501px;width:67px;height:1px"></div>
<div class="c" style="left:726px;top:465px;width:73px;height:36px;background:#f4aeb6"></div>
<div class="gl" style="left:799px;top:465px;width:1px;height:37px"></div>
<div class="gl" style="left:726px;top:501px;width:73px;height:1px"></div>
<div class="c" style="left:800px;top:465px;width:159px;height:36px;background:#f4aeb6"></div>
<div class="gl" style="left:959px;top:465px;width:1px;height:37px"></div>
<div class="gl" style="left:800px;top:501px;width:159px;height:1px"></div>
<div class="c" style="left:960px;top:465px;width:170px;height:36px;background:#f4aeb6"></div>
<div class="gl" style="left:1130px;top:465px;width:1px;height:37px"></div>
<div class="gl" style="left:960px;top:501px;width:170px;height:1px"></div>
<div class="c" style="left:1131px;top:465px;width:152px;height:36px;background:#f4aeb6"></div>
<div class="gl" style="left:1283px;top:465px;width:1px;height:37px"></div>
<div class="gl" style="left:1131px;top:501px;width:152px;height:1px"></div>
<div class="txt" style="left:21px;top:476px;color:#7e7e7e">10</div>
<div class="txt" style="left:101px;top:476px;color:#7e7e7e">L10</div>
<div class="txt" style="left:182px;top:476px">Digital</div>
<svg class="ar" style="left:254.7px;top:478.5px" width="9" height="8" viewBox="0 0 9 8"><path d="M1.1 0.5 L7.5 0.5 Q8.6 0.5 8.1 1.4 L5.3 6.3 Q4.3 7.3 3.3 6.3 L0.5 1.4 Q0 0.5 1.1 0.5 Z" fill="#000"/></svg>
<div class="txt" style="left:303px;top:476px;transform:scaleX(0.90)">Bearbeiten…</div>
<div class="txt txr" style="right:676px;top:476px">60</div>
<div class="txt txr" style="right:608px;top:476px">0</div>
<div class="txt txr" style="right:535px;top:476px">0</div>
<div class="txt txr" style="right:203px;top:476px">0</div>
<div class="txt txr" style="right:50px;top:476px">0</div>
<div class="txt" style="left:803px;top:476px">Sonnenuntergang</div>
<svg class="ar" style="left:945.8px;top:478.5px" width="9" height="8" viewBox="0 0 9 8"><path d="M1.1 0.5 L7.5 0.5 Q8.6 0.5 8.1 1.4 L5.3 6.3 Q4.3 7.3 3.3 6.3 L0.5 1.4 Q0 0.5 1.1 0.5 Z" fill="#000"/></svg>
<div class="c" style="left:17px;top:502px;width:79px;height:37px;background:#f4aeb6"></div>
<div class="gl" style="left:96px;top:502px;width:1px;height:38px"></div>
<div class="gl" style="left:17px;top:539px;width:79px;height:1px"></div>
<div class="c" style="left:97px;top:502px;width:80px;height:37px;background:#f4aeb6"></div>
<div class="gl" style="left:177px;top:502px;width:1px;height:38px"></div>
<div class="gl" style="left:97px;top:539px;width:80px;height:1px"></div>
<div class="c" style="left:178px;top:502px;width:89px;height:37px;background:#f4aeb6"></div>
<div class="gl" style="left:267px;top:502px;width:1px;height:38px"></div>
<div class="gl" style="left:178px;top:539px;width:89px;height:1px"></div>
<div class="c" style="left:268px;top:502px;width:187px;height:37px;background:#f4aeb6"></div>
<div class="gl" style="left:455px;top:502px;width:1px;height:38px"></div>
<div class="gl" style="left:268px;top:539px;width:187px;height:1px"></div>
<div class="c" style="left:456px;top:502px;width:133px;height:37px;background:#f4aeb6"></div>
<div class="gl" style="left:589px;top:502px;width:1px;height:38px"></div>
<div class="gl" style="left:456px;top:539px;width:133px;height:1px"></div>
<div class="c" style="left:590px;top:502px;width:67px;height:37px;background:#f4aeb6"></div>
<div class="gl" style="left:657px;top:502px;width:1px;height:38px"></div>
<div class="gl" style="left:590px;top:539px;width:67px;height:1px"></div>
<div class="c" style="left:658px;top:502px;width:67px;height:37px;background:#f4aeb6"></div>
<div class="gl" style="left:725px;top:502px;width:1px;height:38px"></div>
<div class="gl" style="left:658px;top:539px;width:67px;height:1px"></div>
<div class="c" style="left:726px;top:502px;width:73px;height:37px;background:#f4aeb6"></div>
<div class="gl" style="left:799px;top:502px;width:1px;height:38px"></div>
<div class="gl" style="left:726px;top:539px;width:73px;height:1px"></div>
<div class="c" style="left:800px;top:502px;width:159px;height:37px;background:#f4aeb6"></div>
<div class="gl" style="left:959px;top:502px;width:1px;height:38px"></div>
<div class="gl" style="left:800px;top:539px;width:159px;height:1px"></div>
<div class="c" style="left:960px;top:502px;width:170px;height:37px;background:#f4aeb6"></div>
<div class="gl" style="left:1130px;top:502px;width:1px;height:38px"></div>
<div class="gl" style="left:960px;top:539px;width:170px;height:1px"></div>
<div class="c" style="left:1131px;top:502px;width:152px;height:37px;background:#f4aeb6"></div>
<div class="gl" style="left:1283px;top:502px;width:1px;height:38px"></div>
<div class="gl" style="left:1131px;top:539px;width:152px;height:1px"></div>
<div class="txt" style="left:21px;top:514px;color:#7e7e7e">11</div>
<div class="txt" style="left:101px;top:514px;color:#7e7e7e">L11</div>
<div class="txt" style="left:182px;top:514px">Digital</div>
<svg class="ar" style="left:254.7px;top:516.0px" width="9" height="8" viewBox="0 0 9 8"><path d="M1.1 0.5 L7.5 0.5 Q8.6 0.5 8.1 1.4 L5.3 6.3 Q4.3 7.3 3.3 6.3 L0.5 1.4 Q0 0.5 1.1 0.5 Z" fill="#000"/></svg>
<div class="txt" style="left:303px;top:514px;transform:scaleX(0.90)">Bearbeiten…</div>
<div class="txt txr" style="right:676px;top:514px">60</div>
<div class="txt txr" style="right:608px;top:514px">0</div>
<div class="txt txr" style="right:535px;top:514px">0</div>
<div class="txt txr" style="right:203px;top:514px">0</div>
<div class="txt txr" style="right:50px;top:514px">0</div>
<div class="txt" style="left:803px;top:514px">Sonnenuntergang</div>
<svg class="ar" style="left:945.8px;top:516.0px" width="9" height="8" viewBox="0 0 9 8"><path d="M1.1 0.5 L7.5 0.5 Q8.6 0.5 8.1 1.4 L5.3 6.3 Q4.3 7.3 3.3 6.3 L0.5 1.4 Q0 0.5 1.1 0.5 Z" fill="#000"/></svg>
<div class="c" style="left:17px;top:540px;width:79px;height:36px;background:#f4aeb6"></div>
<div class="gl" style="left:96px;top:540px;width:1px;height:37px"></div>
<div class="gl" style="left:17px;top:576px;width:79px;height:1px"></div>
<div class="c" style="left:97px;top:540px;width:80px;height:36px;background:#f4aeb6"></div>
<div class="gl" style="left:177px;top:540px;width:1px;height:37px"></div>
<div class="gl" style="left:97px;top:576px;width:80px;height:1px"></div>
<div class="c" style="left:178px;top:540px;width:89px;height:36px;background:#f4aeb6"></div>
<div class="gl" style="left:267px;top:540px;width:1px;height:37px"></div>
<div class="gl" style="left:178px;top:576px;width:89px;height:1px"></div>
<div class="c" style="left:268px;top:540px;width:187px;height:36px;background:#f4aeb6"></div>
<div class="gl" style="left:455px;top:540px;width:1px;height:37px"></div>
<div class="gl" style="left:268px;top:576px;width:187px;height:1px"></div>
<div class="c" style="left:456px;top:540px;width:133px;height:36px;background:#f4aeb6"></div>
<div class="gl" style="left:589px;top:540px;width:1px;height:37px"></div>
<div class="gl" style="left:456px;top:576px;width:133px;height:1px"></div>
<div class="c" style="left:590px;top:540px;width:67px;height:36px;background:#f4aeb6"></div>
<div class="gl" style="left:657px;top:540px;width:1px;height:37px"></div>
<div class="gl" style="left:590px;top:576px;width:67px;height:1px"></div>
<div class="c" style="left:658px;top:540px;width:67px;height:36px;background:#f4aeb6"></div>
<div class="gl" style="left:725px;top:540px;width:1px;height:37px"></div>
<div class="gl" style="left:658px;top:576px;width:67px;height:1px"></div>
<div class="c" style="left:726px;top:540px;width:73px;height:36px;background:#f4aeb6"></div>
<div class="gl" style="left:799px;top:540px;width:1px;height:37px"></div>
<div class="gl" style="left:726px;top:576px;width:73px;height:1px"></div>
<div class="c" style="left:800px;top:540px;width:159px;height:36px;background:#f4aeb6"></div>
<div class="gl" style="left:959px;top:540px;width:1px;height:37px"></div>
<div class="gl" style="left:800px;top:576px;width:159px;height:1px"></div>
<div class="c" style="left:960px;top:540px;width:170px;height:36px;background:#f4aeb6"></div>
<div class="gl" style="left:1130px;top:540px;width:1px;height:37px"></div>
<div class="gl" style="left:960px;top:576px;width:170px;height:1px"></div>
<div class="c" style="left:1131px;top:540px;width:152px;height:36px;background:#f4aeb6"></div>
<div class="gl" style="left:1283px;top:540px;width:1px;height:37px"></div>
<div class="gl" style="left:1131px;top:576px;width:152px;height:1px"></div>
<div class="txt" style="left:21px;top:551px;color:#7e7e7e">12</div>
<div class="txt" style="left:101px;top:551px;color:#7e7e7e">L12</div>
<div class="txt" style="left:182px;top:551px">Digital</div>
<svg class="ar" style="left:254.7px;top:553.5px" width="9" height="8" viewBox="0 0 9 8"><path d="M1.1 0.5 L7.5 0.5 Q8.6 0.5 8.1 1.4 L5.3 6.3 Q4.3 7.3 3.3 6.3 L0.5 1.4 Q0 0.5 1.1 0.5 Z" fill="#000"/></svg>
<div class="txt" style="left:303px;top:551px;transform:scaleX(0.90)">Bearbeiten…</div>
<div class="txt txr" style="right:676px;top:551px">60</div>
<div class="txt txr" style="right:608px;top:551px">0</div>
<div class="txt txr" style="right:535px;top:551px">0</div>
<div class="txt txr" style="right:203px;top:551px">0</div>
<div class="txt txr" style="right:50px;top:551px">0</div>
<div class="txt" style="left:803px;top:551px">Sonnenuntergang</div>
<svg class="ar" style="left:945.8px;top:553.5px" width="9" height="8" viewBox="0 0 9 8"><path d="M1.1 0.5 L7.5 0.5 Q8.6 0.5 8.1 1.4 L5.3 6.3 Q4.3 7.3 3.3 6.3 L0.5 1.4 Q0 0.5 1.1 0.5 Z" fill="#000"/></svg>
<div class="btn" style="left:17.5px;top:608px;width:33px;height:33px;background:#fafafa;border-color:#ececec"></div>
<svg style="position:absolute;left:18px;top:608px" width="32" height="32" viewBox="0 0 32 32"><path d="M15.4 8.6 L15.4 24" stroke="#999999" stroke-width="2"/><path d="M7.6 15.6 L15.4 8.4 L23.2 15.6" stroke="#8f8f8f" stroke-width="1.4" fill="none" stroke-linejoin="round"/></svg>
<div class="btn" style="left:61px;top:608px;width:34px;height:33px"></div>
<svg style="position:absolute;left:61px;top:608px" width="33" height="33" viewBox="0 0 33 33"><path d="M16 7 L16 22" stroke="#7a7a7a" stroke-width="1.9"/><path d="M8.4 15.8 L16 23 L23.6 15.8" stroke="#1a1a1a" stroke-width="1.3" fill="none"/></svg>
<div class="btn" style="left:1019px;top:611px;width:92px;height:27px;border:2px solid #3590dc;line-height:27px;padding-right:2px">OK</div>
<div class="btn" style="left:1121px;top:611px;width:90px;height:26px;line-height:28px">Abbrechen</div>
<div class="btn" style="left:1222px;top:611px;width:91px;height:26px;line-height:28px">Hilfe</div>

<div style="position:absolute;left:0;top:650px;width:1330px;height:1px;background:#9c9c9c"></div><div style="position:absolute;left:36px;top:650px;width:6px;height:1px;background:#5a8a2a"></div><div style="position:absolute;left:43px;top:650px;width:10px;height:1px;background:#5a8a2a"></div>
</body></html>
